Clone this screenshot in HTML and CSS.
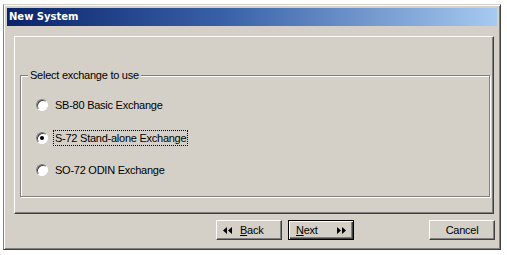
FILE: index.html
```html
<!DOCTYPE html>
<html lang="en">
<head>
    <meta charset="UTF-8">
    <title>New System</title>
    <link rel="stylesheet" href="styles.css">
</head>
<body>
    <div class="window">
        <div class="titlebar">New System</div>

        <div class="content">
            <div class="panel">
                <fieldset class="group">
                    <legend>Select exchange to use</legend>

                    <label class="option">
                        <span class="radio"></span>
                        <span class="text">SB-80 Basic Exchange</span>
                    </label>

                    <label class="option">
                        <span class="radio checked"></span>
                        <span class="text focus">S-72 Stand-alone Exchange</span>
                    </label>

                    <label class="option">
                        <span class="radio"></span>
                        <span class="text">SO-72 ODIN Exchange</span>
                    </label>
                </fieldset>
            </div>

            <div class="actions">
                <button class="btn">
                    <svg width="9" height="7" viewBox="0 0 9 7"><path d="M0 3.5 L4 0 L4 7 Z M5 3.5 L9 0 L9 7 Z" fill="#000"/></svg>
                    <span class="label"><u>B</u>ack</span>
                </button>
                <button class="btn default">
                    <span class="label"><u>N</u>ext</span>
                    <svg width="9" height="7" viewBox="0 0 9 7"><path d="M0 0 L4 3.5 L0 7 Z M5 0 L9 3.5 L5 7 Z" fill="#000"/></svg>
                </button>
                <button class="btn cancel">Cancel</button>
            </div>
        </div>
    </div>
</body>
</html>
```

FILE: styles.css
```css
body {
    margin: 0;
    background: #ffffff;
    font-family: "Liberation Sans", Arial, sans-serif;
    font-size: 11px;
    letter-spacing: -0.25px;
    color: #000;
}

.window {
    margin: 4px 0 0 3px;
    width: 498px;
    height: 246px;
    box-sizing: border-box;
    background: #d4d0c8;
    border: 1px solid;
    border-color: #d4d0c8 #404040 #404040 #808080;
    box-shadow: inset 1px 1px #ffffff, inset -1px -1px #808080;
    padding: 3px;
}

.titlebar {
    height: 18px;
    line-height: 18px;
    padding-left: 2px;
    background: linear-gradient(to right, #0a246a, #3a62a8 45%, #a6caf0);
    color: #ffffff;
    font-family: "DejaVu Sans", sans-serif;
    font-weight: bold;
    font-size: 10px;
    letter-spacing: 0;
}

.content {
    padding: 10px 3px 0 7px;
}

.panel {
    height: 178px;
    box-sizing: border-box;
    border: 1px solid;
    border-color: #ffffff #404040 #404040 #ffffff;
    box-shadow: inset -1px -1px #808080;
    padding: 32px 3px 0 5px;
}

.group {
    margin: 0;
    height: 128px;
    box-sizing: border-box;
    border: 1px solid #808080;
    box-shadow: inset 1px 1px #ffffff, 1px 1px #ffffff;
    padding: 13px 0 0 15px;
    display: flex;
    flex-direction: column;
    gap: 12.5px;
}

.group legend {
    margin-left: -8px;
    padding: 0 2px;
    background: #d4d0c8;
    line-height: 13px;
}

.option {
    display: flex;
    align-items: center;
    height: 20px;
}

.radio {
    width: 12px;
    height: 12px;
    box-sizing: border-box;
    border-radius: 50%;
    background: #ffffff;
    border: 1px solid;
    border-color: #808080 #ffffff #ffffff #808080;
    box-shadow: inset 1px 1px #404040;
    display: flex;
    align-items: center;
    justify-content: center;
}

.radio.checked::after {
    content: "";
    width: 4px;
    height: 4px;
    border-radius: 50%;
    background: #000;
}

.text {
    margin-left: 5px;
    padding: 1px 1px;
    border: 1px solid transparent;
}

.text.focus {
    border: 1px dotted #000;
}

.actions {
    display: flex;
    gap: 6px;
    margin-top: 6px;
    padding-left: 202px;
}

.btn {
    width: 66px;
    height: 20px;
    box-sizing: border-box;
    background: #d4d0c8;
    border: 1px solid;
    border-color: #ffffff #404040 #404040 #ffffff;
    box-shadow: inset -1px -1px #808080;
    font-family: "Liberation Sans", Arial, sans-serif;
    font-size: 11px;
    letter-spacing: -0.25px;
    color: #000;
    padding: 0 6px;
    display: flex;
    align-items: center;
    gap: 8px;
}

.btn.default {
    border: 1px solid #000;
    box-shadow: inset 1px 1px #ffffff, inset -1px -1px #404040, inset -2px -2px #808080;
    justify-content: space-between;
    padding: 0 7px;
}

.btn.cancel {
    margin-left: auto;
    margin-right: -1px;
    justify-content: center;
}
```
